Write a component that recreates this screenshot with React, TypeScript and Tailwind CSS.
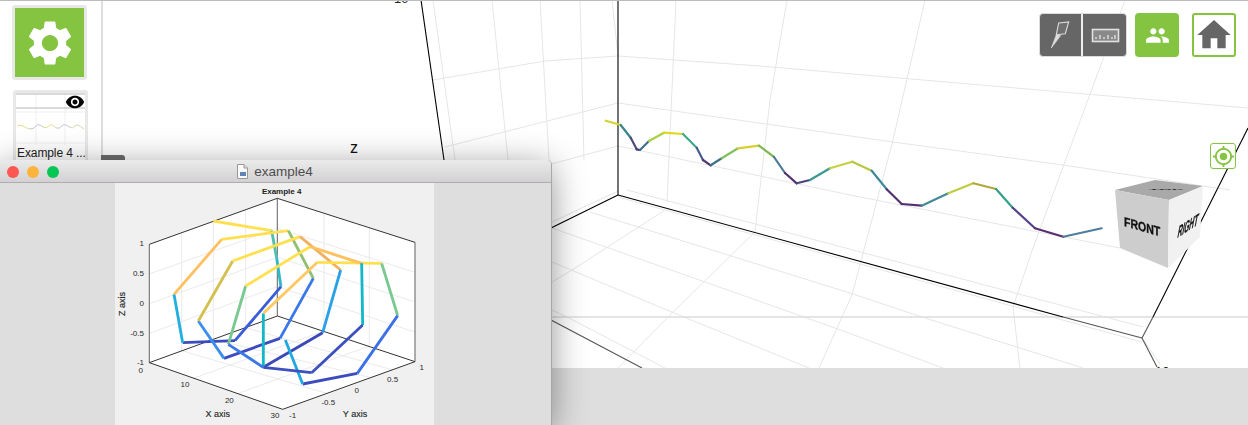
import React from 'react';
import { MdSettings, MdVisibility, MdPeople, MdHome, MdGpsFixed } from 'react-icons/md';

const sansFont = { fontFamily: '"Liberation Sans", Arial, sans-serif' };

// scene grid, in page coordinates
const sceneGrid: [number, number, number, number][] = [
  [433, 0, 455, 160], [492, 0, 508, 160], [540, 0, 549, 160], [580, 0, 584, 160], [612, 0, 618, 56],
  [676, 0, 667, 202], [665, 210, 572, 270], [572, 270, 552, 282],
  [787, 0, 770, 100], [770, 100, 755, 232], [755, 232, 672, 313], [672, 313, 618, 368],
  [925, 0, 893, 140], [893, 140, 852, 295], [852, 295, 819, 368],
  [1125, 0, 1073, 140], [1073, 140, 1033, 248], [1033, 248, 1013, 307], [1013, 307, 1020, 368],
  [433, 80, 545, 61], [545, 61, 618, 56], [618, 56, 760, 66], [760, 66, 1248, 108],
  [445, 147, 618, 103], [618, 103, 893, 142], [893, 142, 1063, 165], [1063, 165, 1230, 190],
  [455, 190, 618, 146], [618, 146, 850, 195], [850, 195, 1120, 248],
  [627, 190, 1143, 327],
  [618, 197, 1142, 342],
  [590, 212, 850, 293], [850, 293, 922, 317], [922, 317, 1083, 368],
  [552, 228, 705, 282], [705, 282, 835, 328], [835, 328, 943, 368],
  [552, 262, 674, 313], [674, 313, 809, 368],
  [552, 310, 569, 318], [569, 318, 665, 368],
  [552, 222, 618, 191],
  [1142, 338, 1160, 364],
];

// black above the horizon line, grey below it
const sceneAxes: [number, number, number, number, string][] = [
  [421, 0, 444, 160, '#000'],
  [618, 0, 618, 195, '#000'],
  [618, 195, 551, 228, '#000'],
  [618, 195, 1063, 317, '#000'],
  [1063, 317, 1142, 338, '#555'],
  [1153, 317, 1248, 128, '#000'],
  [1142, 338, 1153, 317, '#555'],
  [1142, 338, 1157, 367, '#555'],
  [551, 320, 642, 368, '#555'],
];

const curve: [number, number, string][] = [
  [605.7, 120.7, '#d4d32e'], [620.7, 125, '#35868a'], [630.7, 137.7, '#4d4a7e'], [636.7, 149.3, '#4a3a70'],
  [640, 150, '#3e6f8b'], [649, 141, '#a8d040'], [664, 132.7, '#e0d820'], [683, 134, '#3fa888'],
  [696.7, 147.7, '#4d5c8e'], [703, 160, '#503a75'], [710.7, 165.3, '#3e6f8b'], [721.7, 158.3, '#7fc060'],
  [738, 148.3, '#d8d030'], [759, 145.7, '#80b850'], [774, 157, '#4a7a98'], [785, 173, '#55306f'],
  [796.7, 183.3, '#4d4580'], [810, 180, '#3a9a90'], [830, 168.3, '#c8d040'], [852.3, 161.7, '#b8c840'],
  [871.7, 170.7, '#3f8a98'], [886.7, 189.3, '#552f70'], [901.7, 204, '#552f70'], [921.7, 205.7, '#438a98'],
  [948.3, 193.3, '#bfcb40'], [973.3, 183.3, '#b0a838'], [996, 189, '#35a088'], [1012.7, 207.7, '#55408a'],
  [1035, 228.3, '#5a2f72'], [1063.3, 236.7, '#4f7d9c'], [1101.7, 228.3, '#4f7d9c'],
];

// matlab plot, in 3x crop units (viewBox below)
const plotSegments: [number, number, number, number, string][] = [
  [340, 123, 515, 152, '#ffe050'], [515, 152, 530, 235, '#4fc0b0'], [530, 235, 543, 320, '#30b8c8'],
  [543, 320, 405, 482, '#3a5cd8'], [405, 482, 248, 488, '#3c4cc0'], [248, 488, 222, 343, '#20b0e0'],
  [222, 343, 365, 178, '#ffc060'], [365, 178, 565, 152, '#ffe050'], [565, 152, 640, 295, '#90c070'],
  [640, 295, 540, 475, '#3a78ea'], [540, 475, 372, 535, '#3c4cc0'], [372, 535, 295, 423, '#3a8eee'],
  [295, 423, 398, 243, '#d4c050'], [398, 243, 600, 170, '#ffe050'], [600, 170, 722, 270, '#f0b060'],
  [722, 270, 668, 458, '#2aa0e8'], [668, 458, 490, 562, '#3a48b8'], [490, 562, 490, 400, '#10b8c8'],
  [490, 400, 652, 247, '#ffc860'], [652, 247, 845, 250, '#ffe050'], [845, 250, 893, 407, '#78c890'],
  [893, 407, 772, 580, '#3a70e8'], [772, 580, 608, 612, '#3c4cc0'], [608, 612, 556, 480, '#20a8e0'],
  [385, 493, 437, 318, '#78c890'], [437, 318, 630, 200, '#ffe050'], [630, 200, 785, 250, '#ffc060'],
  [785, 250, 788, 435, '#10b8c8'], [788, 435, 635, 578, '#3c50c0'], [635, 578, 490, 562, '#3c50c0'],
  [490, 562, 385, 493, '#3a78e8'],
];

const plotGrid: [number, number, number, number][] = [
  [245, 158, 245, 512], [340, 123, 340, 478], [437, 90, 437, 443], [672, 100, 672, 453], [808, 143, 808, 498],
  [148, 282, 532, 145], [532, 145, 945, 277], [148, 371, 532, 232], [532, 232, 945, 366],
  [148, 460, 532, 320], [532, 320, 945, 456],
  [245, 512, 680, 640], [340, 478, 810, 592], [437, 443, 878, 570],
  [672, 453, 280, 595], [808, 498, 415, 640],
];

const plotTicks: [string, number, number, 'start' | 'middle' | 'end'][] = [
  ['1', 132, 198, 'end'], ['0.5', 132, 288, 'end'], ['0', 132, 378, 'end'], ['-0.5', 132, 467, 'end'], ['-1', 132, 555, 'end'],
  ['0', 122, 578, 'middle'], ['10', 255, 621, 'middle'], ['20', 388, 668, 'middle'], ['30', 525, 713, 'middle'],
  ['-1', 578, 713, 'middle'], ['-0.5', 685, 676, 'middle'], ['0', 770, 640, 'middle'], ['0.5', 878, 605, 'middle'], ['1', 965, 570, 'middle'],
];

const Scene = () => (
  <svg className="block w-[1145px] h-[368px]" viewBox="103 0 1145 368" style={sansFont}>
    {sceneGrid.map(([x1, y1, x2, y2], i) => (
      <line key={i} x1={x1} y1={y1} x2={x2} y2={y2} stroke="#e6e6e6" strokeWidth="1" />
    ))}
    <line x1="103" y1="317" x2="1248" y2="317" stroke="#dcdcdc" strokeWidth="1.6" />
    {sceneAxes.map(([x1, y1, x2, y2, color], i) => (
      <line key={i} x1={x1} y1={y1} x2={x2} y2={y2} stroke={color} strokeWidth="1.1" />
    ))}
    {curve.slice(0, -1).map(([x, y, color], i) => (
      <line key={i} x1={x} y1={y} x2={curve[i + 1][0]} y2={curve[i + 1][1]} stroke={color} strokeWidth="2.2" strokeLinecap="round" />
    ))}
    <text x="350" y="153" fontSize="16" fill="#111">z</text>
    <text x="394" y="3" fontSize="13" fill="#222">10</text>
    <text x="1155" y="375.5" fontSize="13" fill="#222">10</text>

    {/* view cube */}
    <polygon points="1115,190 1155,180 1203,186 1169,200" fill="#a9a9a9" />
    <polygon points="1115,190 1169,200 1168,268 1120,248" fill="#cdcdcd" />
    <polygon points="1169,200 1203,186 1200,237 1168,268" fill="#f1f1f1" />
    <g className="blur-[0.5px]" fill="#111" fontWeight="700" fontSize="12" stroke="#111" strokeWidth=".3">
      <text transform="translate(1124,226) skewY(16) scale(.88,1.1)">FRONT</text>
      <text transform="translate(1177,238) skewY(-33) skewX(-12) scale(.54,1.25)">RIGHT</text>
      <text transform="translate(1149,189.5) scale(1.4,.16)" fill="#333">TOP</text>
    </g>
  </svg>
);

const Plot = () => (
  <svg className="block w-[319px] h-[242px]" viewBox="45 9 957 726" style={sansFont}>
    <polygon points="148,193 532,55 945,187 945,545 548,688 148,548" fill="#fff" />
    {plotGrid.map(([x1, y1, x2, y2], i) => (
      <line key={i} x1={x1} y1={y1} x2={x2} y2={y2} stroke="#e6e6e6" strokeWidth="2.5" />
    ))}
    <path d="M148 193V548M532 55V408M945 187V545" stroke="#777" strokeWidth="3.5" fill="none" />
    <path d="M148 193L532 55L945 187M148 548L532 408L945 545M148 548L548 688L945 545" stroke="#333" strokeWidth="3" fill="none" />
    {plotSegments.map(([x1, y1, x2, y2, color], i) => (
      <line key={i} x1={x1} y1={y1} x2={x2} y2={y2} stroke={color} strokeWidth="8.5" />
    ))}
    {plotTicks.map(([label, x, y, anchor], i) => (
      <text key={i} x={x} y={y} fontSize="24" fill="#2a2a2a" textAnchor={anchor}>{label}</text>
    ))}
    <text x="545" y="41" fontSize="24" fontWeight="700" fill="#222" textAnchor="middle">Example 4</text>
    <g fontSize="27" fill="#2a2a2a" textAnchor="middle" stroke="#2a2a2a" strokeWidth=".5">
      <text x="353" y="712">X axis</text>
      <text x="765" y="710">Y axis</text>
      <text transform="translate(75,372) rotate(-90)">Z axis</text>
    </g>
  </svg>
);

const FigureWindow = () => (
  <div
    className="absolute left-0 top-[160px] w-[552px] h-[265px] flex flex-col rounded-t-[5px] bg-[#dedede] border-r border-[#a8a8a8] shadow-[0_6px_34px_rgba(0,0,0,0.42)]"
    style={sansFont}
  >
    <div className="relative flex items-center justify-center h-[23px] rounded-t-[5px] bg-gradient-to-b from-[#ebebeb] to-[#d3d1d3] border-b border-[#adadad]">
      <div className="absolute left-[7px] top-[6px] flex gap-[8px]">
        <span className="w-[12px] h-[12px] rounded-full bg-[#fc5753]" />
        <span className="w-[12px] h-[12px] rounded-full bg-[#fdb43c]" />
        <span className="w-[12px] h-[12px] rounded-full bg-[#06c755]" />
      </div>
      <div className="flex items-center gap-[6px] ml-[-1px] mt-[1px]">
        <svg width="11" height="15" viewBox="0 0 11 15">
          <path d="M.5.5H7L10.5 4V14.5H.5Z" fill="#fafafa" stroke="#999" />
          <path d="M7 .5V4H10.5" fill="#ddd" stroke="#999" />
          <rect x="3" y="8" width="6" height="4" fill="#5d86b5" />
        </svg>
        <span className="text-[13.5px] leading-none text-[#4d4d4d]">example4</span>
      </div>
    </div>
    <div className="flex-1 pl-[115px] overflow-hidden">
      <div className="w-[319px] h-full bg-[#f0f0f0]">
        <Plot />
      </div>
    </div>
  </div>
);

const Sidebar = () => (
  <div className="w-[103px] shrink-0 h-full bg-white border-r-2 border-[#dedede] pt-[4px]" style={sansFont}>
    <button className="ml-[12px] flex items-center justify-center w-[75px] h-[75px] rounded-[3px] bg-[#84c441] border-[3px] border-[#e8e8e8]">
      <MdSettings className="text-white" size={54} />
    </button>
    <div className="relative ml-[13px] mt-[10px] w-[75px] h-[80px] rounded-[3px] border-[3px] border-[#e8e8e8] bg-white overflow-hidden">
      <svg className="block w-[69px] h-[52px]" viewBox="0 0 69 52">
        <path d="M20 0V52M49 0V52M0 19H69M0 50H69" stroke="#efefef" fill="none" />
        <path d="M0 1H69M0 15H69" stroke="#b5b5b5" fill="none" />
        <path d="M1 33Q4 31 7 33T14 36" stroke="#e0df90" fill="none" />
        <path d="M14 36Q18 36 20 33T27 34" stroke="#c4c4dc" fill="none" />
        <path d="M27 34Q30 36 33 33T40 35" stroke="#e0df90" fill="none" />
        <path d="M40 35Q44 36 46 33T53 34" stroke="#c4c4dc" fill="none" />
        <path d="M53 34Q57 36 59 33T68 36" stroke="#d8d8b0" fill="none" />
      </svg>
      <MdVisibility className="absolute right-0 top-[-1px] text-black" size={20} />
      <div className="text-[12px] leading-[15px] tracking-[-0.1px] pl-[1px] pt-[1px] text-[#222] whitespace-nowrap">Example 4 ...</div>
    </div>
  </div>
);

const Toolbar = () => (
  <div className="absolute right-[12px] top-[13px] flex items-start gap-[8px]">
    <div className="flex h-[44px] rounded-[4px] bg-[#666] border border-[#dcdcdc] overflow-hidden">
      <div className="w-[43px] h-full border-r-2 border-[#eee]">
        <svg width="41" height="42" viewBox="0 0 41 42">
          <path d="M18.7 9L28.7 8L25.3 19.7L16.3 20.7Z" fill="#707070" stroke="#ddd" strokeWidth="1.1" />
          <path d="M16.3 20.7L20.7 21.5L11.3 34Z" fill="#ddd" stroke="#ddd" strokeWidth=".6" />
        </svg>
      </div>
      <div className="w-[43px] h-full">
        <svg width="43" height="42" viewBox="0 0 43 42">
          <rect x="9.5" y="15.5" width="26" height="12" fill="#8a8a8a" stroke="#e2e2e2" strokeWidth="1.6" />
          <path d="M13 25V23M17 25V21M21 25V23M25 25V21M29 25V23M32 25V21" stroke="#eee" strokeWidth="1.2" />
        </svg>
      </div>
    </div>
    <button className="flex items-center justify-center w-[44px] h-[44px] rounded-[4px] bg-[#84c441]">
      <MdPeople className="text-white" size={25} />
    </button>
    <button className="flex items-center justify-center w-[44px] h-[44px] ml-[5px] rounded-[3px] bg-white border-2 border-[#84c441]">
      <MdHome className="text-[#666]" size={40} />
    </button>
  </div>
);

export default function App() {
  return (
    <div className="relative w-[1248px] h-[425px] overflow-hidden bg-[#dedede]">
      <div className="flex h-[368px] bg-white border-t border-[#bcbcbc]">
        <Sidebar />
        <div className="relative flex-1 mt-[-1px] overflow-hidden">
          <Scene />
          <div className="absolute left-0 right-0 top-0 h-px bg-[#bcbcbc]" />
          <Toolbar />
          <button className="absolute right-[12px] top-[143px] flex items-center justify-center w-[26px] h-[26px] rounded-[3px] bg-white border border-[#84c441]">
            <MdGpsFixed className="text-[#84c441]" size={23} />
          </button>
        </div>
      </div>
      <div className="absolute left-[101px] top-[155px] w-[24px] h-[6px] rounded-tr-[3px] bg-[#6d6d6d]" />
      <FigureWindow />
    </div>
  );
}
